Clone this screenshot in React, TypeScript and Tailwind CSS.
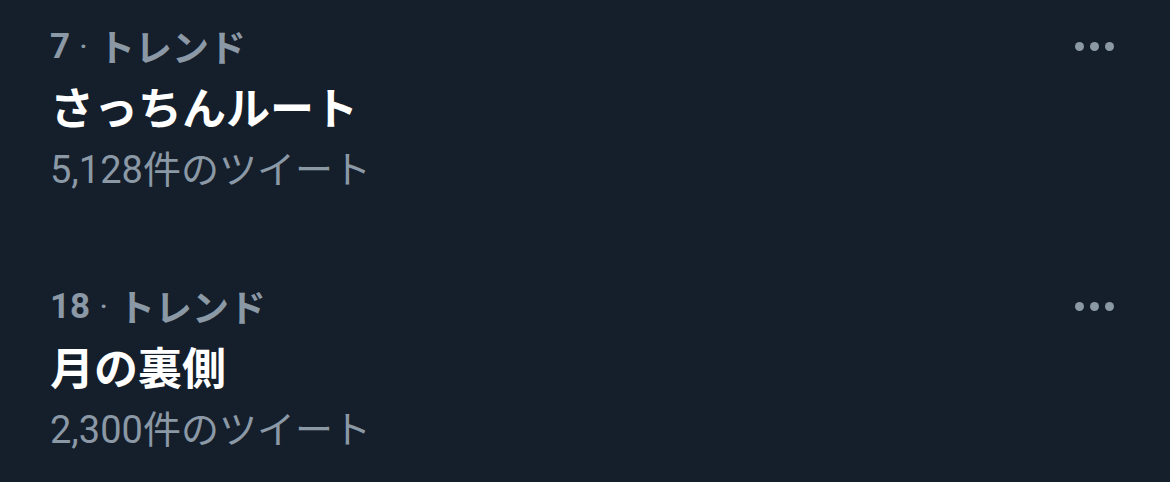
import React from "react";

type Trend = { rank: number; name: string; count: string };

const trends: Trend[] = [
	{ rank: 7, name: "さっちんルート", count: "5,128件のツイート" },
	{ rank: 18, name: "月の裏側", count: "2,300件のツイート" },
];

const jp = '"Noto Sans CJK JP", "Noto Sans", sans-serif';
const mixed = 'Roboto, "Noto Sans CJK JP", sans-serif';

function MoreDots() {
	return (
		<div className="flex items-center gap-[6px] h-[62px]">
			<span className="block w-[9px] h-[9px] rounded-full bg-[#8b98a5]" />
			<span className="block w-[9px] h-[9px] rounded-full bg-[#8b98a5]" />
			<span className="block w-[9px] h-[9px] rounded-full bg-[#8b98a5]" />
		</div>
	);
}

function TrendItem({ t }: { t: Trend }) {
	return (
		<div className="flex justify-between pl-[50px] pr-[56px] pt-[15px] h-[260px]">
			<div className="flex flex-col">
				<div className="h-[62px] flex items-center text-[#8b98a5] leading-none">
					<span className="text-[35px] font-bold" style={{ fontFamily: mixed }}>
						{t.rank}
					</span>
					<span className="ml-[9px] mr-[10px] text-[34px]" style={{ fontFamily: mixed }}>
						·
					</span>
					<span className="text-[37px] font-bold" style={{ fontFamily: jp }}>
						トレンド
					</span>
				</div>
				<div
					className="h-[62px] flex items-center pb-[4px] text-[44px] font-bold text-white leading-none"
					style={{ fontFamily: jp }}
				>
					{t.name}
				</div>
				<div
					className="h-[62px] flex items-center text-[38px] text-[#8b98a5] leading-none"
					style={{ fontFamily: mixed }}
				>
					{t.count}
				</div>
			</div>
			<MoreDots />
		</div>
	);
}

export default function App() {
	return (
		<div className="w-[1170px] h-[482px] bg-[#151f2b] overflow-hidden">
			{trends.map((t) => (
				<TrendItem key={t.rank} t={t} />
			))}
		</div>
	);
}
